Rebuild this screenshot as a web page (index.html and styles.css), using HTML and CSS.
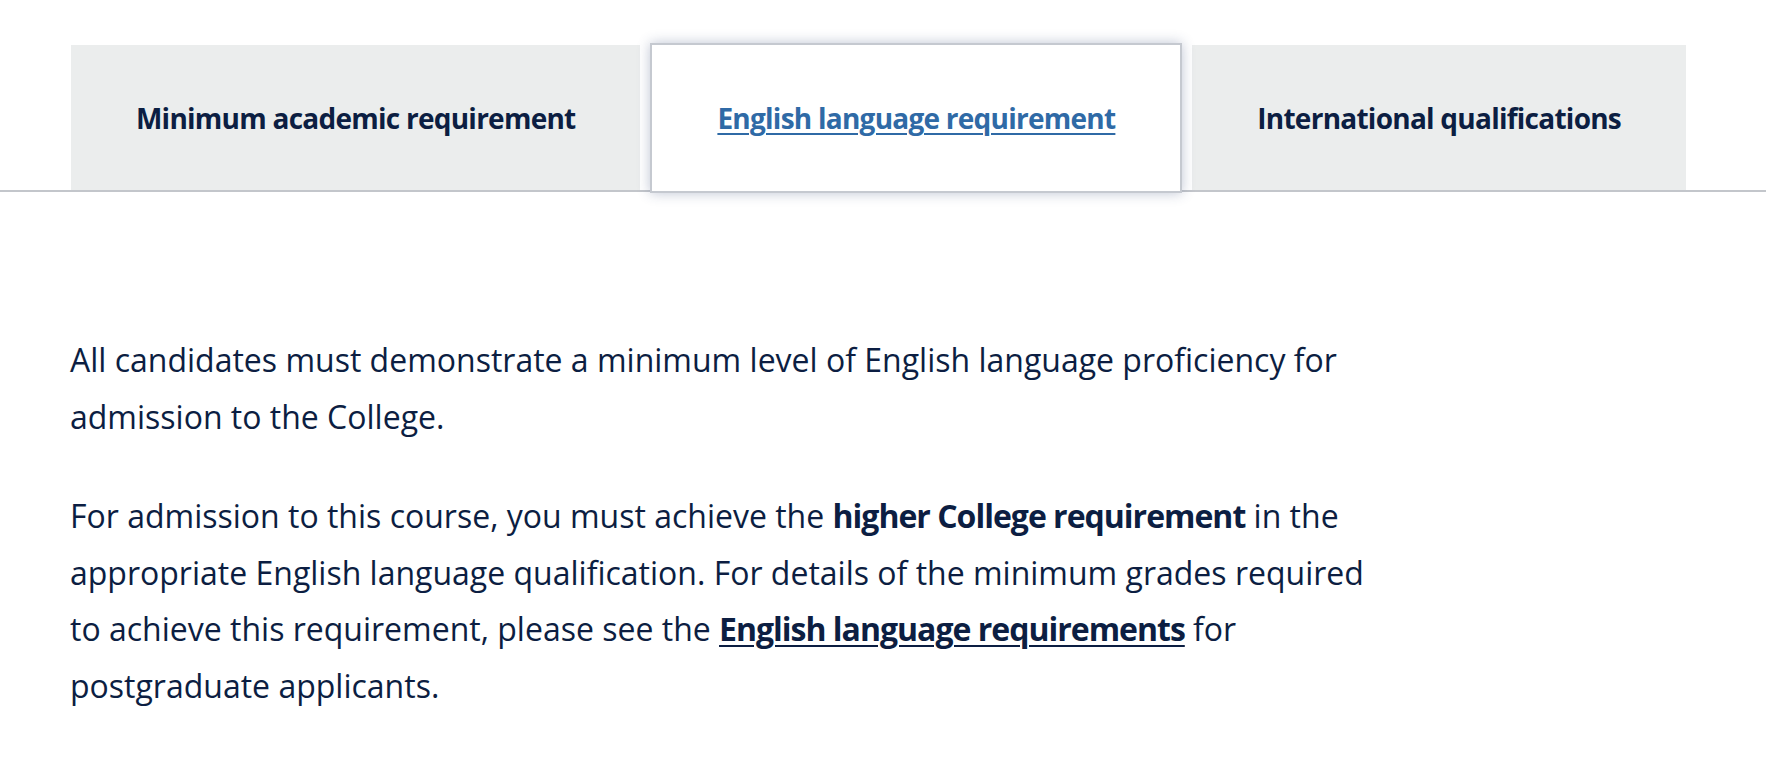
FILE: index.html
```html
<!DOCTYPE html>
<html lang="en">
<head>
<meta charset="utf-8">
<title>Entry requirements</title>
<link rel="stylesheet" href="styles.css">
</head>
<body>
<section class="requirements">
  <nav class="tabs" aria-label="Entry requirements">
    <ul class="tab-list">
      <li class="tab"><a class="tab-link" href="#minimum">Minimum academic requirement</a></li>
      <li class="tab tab-active"><a class="tab-link" href="#english" aria-current="page">English language requirement</a></li>
      <li class="tab"><a class="tab-link" href="#international">International qualifications</a></li>
    </ul>
  </nav>
  <div class="tab-panel" id="english">
    <p>All candidates must demonstrate a minimum level of English language proficiency for admission to the College.</p>
    <p>For admission to this course, you must achieve the <strong>higher College requirement</strong> in the appropriate English language qualification. For details of the minimum grades required to achieve this requirement, please see the <a class="inline-link" href="#">English language requirements</a> for postgraduate applicants.</p>
  </div>
</section>
</body>
</html>
```
FILE: styles.css
```css
* {
  box-sizing: border-box;
}

body {
  margin: 0;
  background: #ffffff;
  color: #0c1e42;
  font-family: "Open Sans", "Lato", sans-serif;
}

.tabs {
  padding-top: 45px;
  border-bottom: 2px solid #c3c6cb;
}

.tab-list {
  display: flex;
  gap: 10px;
  margin: 0 80px 0 71px;
  padding: 0;
  list-style: none;
}

.tab {
  flex: 1 1 auto;
  display: flex;
  align-items: center;
  justify-content: center;
  height: 145px;
  padding: 0 40px;
  background: #ebeded;
}

.tab-link {
  color: #0c1e42;
  font-size: 28px;
  font-weight: 700;
  letter-spacing: -0.75px;
  text-decoration: none;
  white-space: nowrap;
}

.tab-active {
  position: relative;
  z-index: 1;
  height: 150px;
  margin-top: -2px;
  margin-bottom: -3px;
  background: #ffffff;
  border: 2px solid #c5c9d0;
  box-shadow: 0 0 12px rgba(40, 60, 110, 0.3);
}

.tab-active .tab-link {
  color: #2f6aa6;
  text-decoration: underline;
  text-decoration-thickness: 2px;
  text-underline-offset: 4px;
}

.tab-panel {
  max-width: 1385px;
  padding: 140px 0 0 70px;
}

.tab-panel p {
  margin: 0 0 43px;
  font-size: 32px;
  line-height: 56.5px;
}

.tab-panel strong {
  font-weight: 700;
  letter-spacing: -1px;
}

.inline-link {
  color: #0c1e42;
  font-weight: 700;
  letter-spacing: -1px;
  text-decoration: underline;
  text-decoration-thickness: 2px;
  text-underline-offset: 4px;
}
```
